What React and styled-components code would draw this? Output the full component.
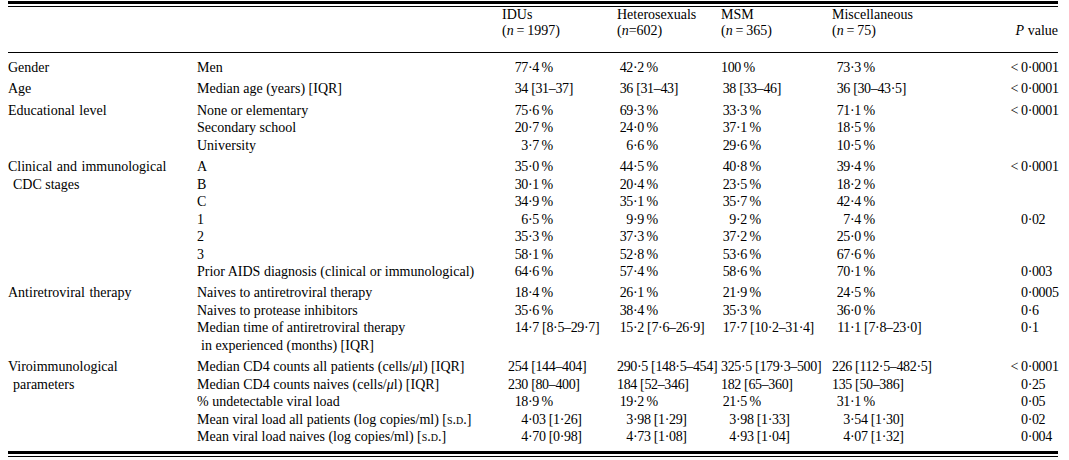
import React from 'react';
import styled, { createGlobalStyle } from 'styled-components';

const Global = createGlobalStyle`
  html, body { margin: 0; padding: 0; background: #fff; }
  body {
    padding: 1px 0 0 8px;
    font-family: "Liberation Serif", "Times New Roman", serif;
    color: #000;
  }
`;

const Frame = styled.div`
  width: 1050px;
  border-top: 3px solid #000;
  border-bottom: 1px solid #000;
  padding: 2px 0;
`;

const Table = styled.table`
  width: 100%;
  border-collapse: collapse;
  table-layout: fixed;
  font-size: 14px;
  border-top: 1px solid #000;
  border-bottom: 3px solid #000;
`;

const Col = styled.col`
  width: ${(p) => p.$w}px;
`;

const HeadCell = styled.th`
  font-weight: normal;
  text-align: ${(p) => (p.$right ? 'right' : 'left')};
  vertical-align: bottom;
  line-height: 16px;
  padding: 0 0 13px 0;
  border-bottom: 1px solid #000;
  white-space: nowrap;
`;

const Row = styled.tr`
  & > td {
    padding-top: ${(p) => p.$lead}px;
    padding-bottom: ${(p) => p.$tail}px;
  }
`;

const Cell = styled.td`
  vertical-align: top;
  line-height: 17.45px;
  padding-left: 0;
  padding-right: 0;
  white-space: nowrap;
  text-align: ${(p) => (p.$right ? 'right' : 'left')};
`;

const ValueCell = styled(Cell)`
  letter-spacing: -0.35px;
`;

const Line = styled.span`
  display: block;
`;

const ContLine = styled(Line)`
  padding-left: ${(p) => p.$indent}px;
`;

const LabelLine = styled(Line)`
  word-spacing: 1px;
`;

const Em = styled.span`
  font-style: italic;
`;

const Caps = styled.span`
  font-variant: small-caps;
`;

const IntPart = styled.span`
  display: inline-block;
  min-width: ${(p) => p.$w}px;
  text-align: right;
`;

const PVal = styled.span`
  display: inline-block;
  width: 37px;
  text-align: left;
`;

const Lt = styled.span`
  margin-right: 3px;
`;

const COLS = [189, 305, 115, 104, 111, 158, 68];
const INT_W = [26, 16, 15, 18];

const T = '\u2009';
const pc = (s) => `${s}${T}%`;

const mu = (
  <>
    cells/<Em>μ</Em>l
  </>
);
const sd = (
  <>
    [<Caps>s.d.</Caps>]
  </>
);

const GROUPS = [
  {
    label: ['Gender'],
    rows: [{ item: 'Men', v: [pc('77·4'), pc('42·2'), pc('100'), pc('73·3')], p: '<0·0001' }],
  },
  {
    label: ['Age'],
    rows: [
      {
        item: 'Median age (years) [IQR]',
        v: ['34 [31–37]', '36 [31–43]', '38 [33–46]', '36 [30–43·5]'],
        p: '<0·0001',
      },
    ],
  },
  {
    label: ['Educational level'],
    rows: [
      { item: 'None or elementary', v: [pc('75·6'), pc('69·3'), pc('33·3'), pc('71·1')], p: '<0·0001' },
      { item: 'Secondary school', v: [pc('20·7'), pc('24·0'), pc('37·1'), pc('18·5')] },
      { item: 'University', v: [pc('3·7'), pc('6·6'), pc('29·6'), pc('10·5')] },
    ],
  },
  {
    label: ['Clinical and immunological', 'CDC stages'],
    rows: [
      { item: 'A', v: [pc('35·0'), pc('44·5'), pc('40·8'), pc('39·4')], p: '<0·0001' },
      { item: 'B', v: [pc('30·1'), pc('20·4'), pc('23·5'), pc('18·2')] },
      { item: 'C', v: [pc('34·9'), pc('35·1'), pc('35·7'), pc('42·4')] },
      { item: '1', v: [pc('6·5'), pc('9·9'), pc('9·2'), pc('7·4')], p: '0·02' },
      { item: '2', v: [pc('35·3'), pc('37·3'), pc('37·2'), pc('25·0')] },
      { item: '3', v: [pc('58·1'), pc('52·8'), pc('53·6'), pc('67·6')] },
      {
        item: 'Prior AIDS diagnosis (clinical or immunological)',
        v: [pc('64·6'), pc('57·4'), pc('58·6'), pc('70·1')],
        p: '0·003',
      },
    ],
  },
  {
    label: ['Antiretroviral therapy'],
    rows: [
      { item: 'Naives to antiretroviral therapy', v: [pc('18·4'), pc('26·1'), pc('21·9'), pc('24·5')], p: '0·0005' },
      { item: 'Naives to protease inhibitors', v: [pc('35·6'), pc('38·4'), pc('35·3'), pc('36·0')], p: '0·6' },
      {
        item: 'Median time of antiretroviral therapy',
        cont: 'in experienced (months) [IQR]',
        v: ['14·7 [8·5–29·7]', '15·2 [7·6–26·9]', '17·7 [10·2–31·4]', '11·1 [7·8–23·0]'],
        p: '0·1',
      },
    ],
  },
  {
    label: ['Viroimmunological', 'parameters'],
    rows: [
      {
        item: <>Median CD4 counts all patients ({mu}) [IQR]</>,
        v: ['254 [144–404]', '290·5 [148·5–454]', '325·5 [179·3–500]', '226 [112·5–482·5]'],
        p: '<0·0001',
      },
      {
        item: <>Median CD4 counts naives ({mu}) [IQR]</>,
        v: ['230 [80–400]', '184 [52–346]', '182 [65–360]', '135 [50–386]'],
        p: '0·25',
      },
      { item: '% undetectable viral load', v: [pc('18·9'), pc('19·2'), pc('21·5'), pc('31·1')], p: '0·05' },
      {
        item: <>Mean viral load all patients (log copies/ml) {sd}</>,
        v: ['4·03 [1·26]', '3·98 [1·29]', '3·98 [1·33]', '3·54 [1·30]'],
        p: '0·02',
      },
      {
        item: <>Mean viral load naives (log copies/ml) {sd}</>,
        v: ['4·70 [0·98]', '4·73 [1·08]', '4·93 [1·04]', '4·07 [1·32]'],
        p: '0·004',
      },
    ],
  },
];

const HEADS = [
  { name: 'IDUs', n: <>(<Em>n</Em>{T}={T}1997)</> },
  { name: 'Heterosexuals', n: <>(<Em>n</Em>=602)</> },
  { name: 'MSM', n: <>(<Em>n</Em>{T}={T}365)</> },
  { name: 'Miscellaneous', n: <>(<Em>n</Em>{T}={T}75)</> },
];

function Value({ text, intW }) {
  const m = text.match(/^(\d+)(.*)$/);
  return (
    <>
      <IntPart $w={intW}>{m[1]}</IntPart>
      {m[2]}
    </>
  );
}

function PValue({ text }) {
  if (!text) return null;
  const lt = text.startsWith('<');
  return (
    <>
      {lt && <Lt>&lt;</Lt>}
      <PVal>{lt ? text.slice(1) : text}</PVal>
    </>
  );
}

export default function App() {
  return (
    <>
      <Global />
      <Frame>
        <Table>
          <colgroup>
            {COLS.map((w, i) => (
              <Col key={i} $w={w} />
            ))}
          </colgroup>
          <thead>
            <tr>
              <HeadCell />
              <HeadCell />
              {HEADS.map((h) => (
                <HeadCell key={h.name}>
                  <Line>{h.name}</Line>
                  <Line>{h.n}</Line>
                </HeadCell>
              ))}
              <HeadCell $right>
                <Em>P</Em> value
              </HeadCell>
            </tr>
          </thead>
          <tbody>
            {GROUPS.map((g, gi) =>
              g.rows.map((r, ri) => {
                const lead = ri === 0 ? (gi === 0 ? 6 : 4) : 0;
                const tail = gi === GROUPS.length - 1 && ri === g.rows.length - 1 ? 5 : 0;
                return (
                  <Row key={`${gi}-${ri}`} $lead={lead} $tail={tail}>
                    {ri === 0 && (
                      <Cell rowSpan={g.rows.length}>
                        <LabelLine>{g.label[0]}</LabelLine>
                        {g.label[1] && <ContLine $indent={5}>{g.label[1]}</ContLine>}
                      </Cell>
                    )}
                    <Cell>
                      <Line>{r.item}</Line>
                      {r.cont && <ContLine $indent={4}>{r.cont}</ContLine>}
                    </Cell>
                    {r.v.map((v, vi) => (
                      <ValueCell key={vi}>
                        <Value text={v} intW={INT_W[vi]} />
                      </ValueCell>
                    ))}
                    <ValueCell $right>
                      <PValue text={r.p} />
                    </ValueCell>
                  </Row>
                );
              })
            )}
          </tbody>
        </Table>
      </Frame>
    </>
  );
}
